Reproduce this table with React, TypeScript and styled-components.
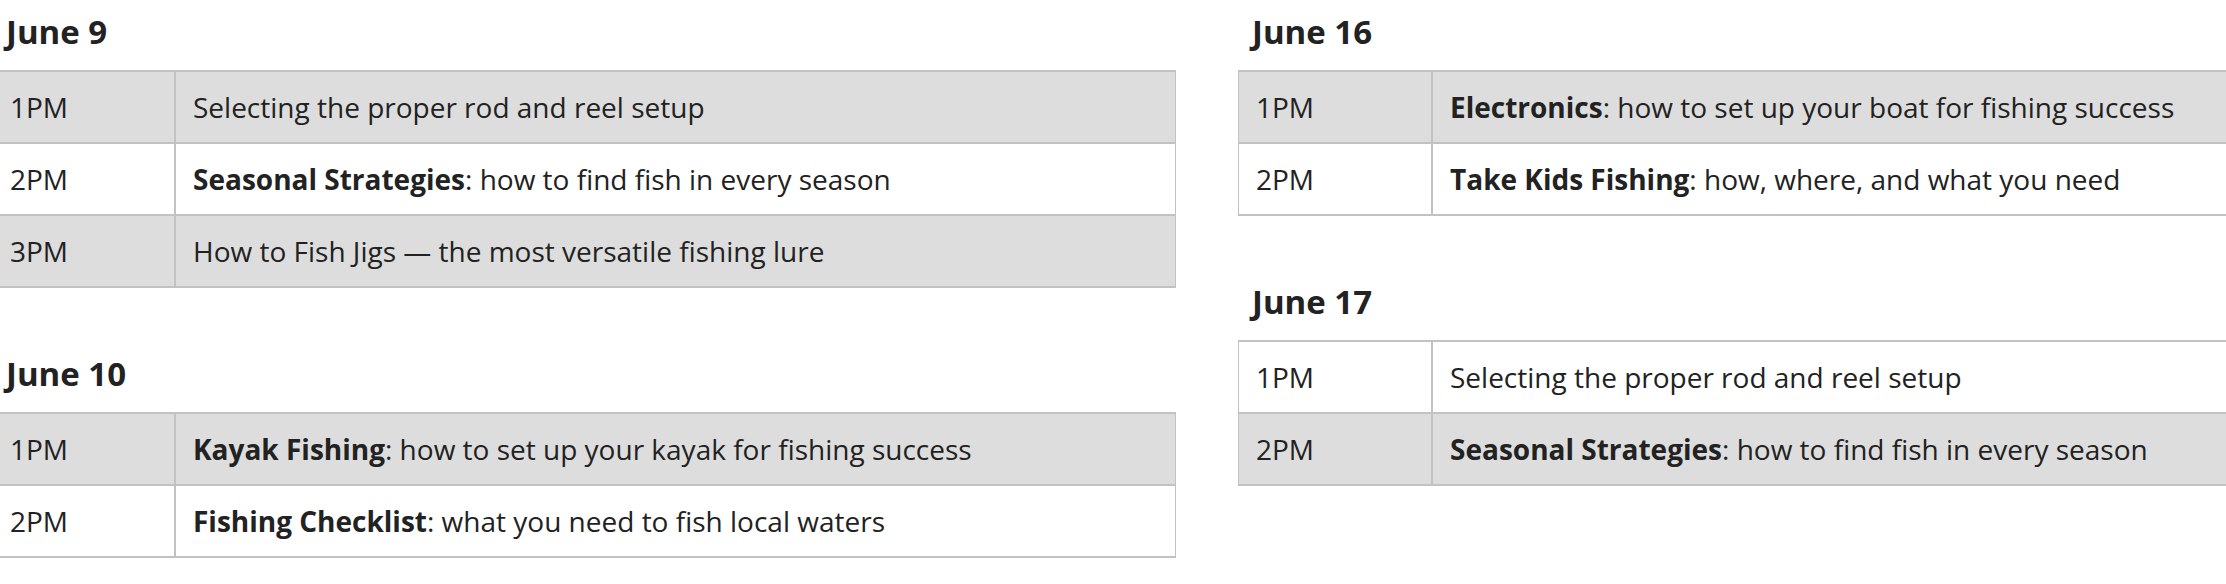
import React from 'react';
import styled, { createGlobalStyle } from 'styled-components';

const GlobalStyle = createGlobalStyle`
* {
    box-sizing: border-box;
}
body {
    margin: 0;
    background: #ffffff;
    overflow: hidden;
    font-family: "Open Sans", "Liberation Sans", sans-serif;
    color: #222222;
}
`;

const Page = styled.div`
display: flex;
align-items: flex-start;
gap: 62px;
width: max-content;
margin-left: -8px;
padding-top: 11px;
`;

const Column = styled.div`
display: flex;
flex-direction: column;
gap: 65px;
width: 1184px;
`;

const Heading = styled.h2`
margin: 0 0 18px 14px;
font-size: 33px;
line-height: 41px;
font-weight: 700;
color: #222222;
`;

const Table = styled.table`
width: 100%;
table-layout: fixed;
border-collapse: separate;
border-spacing: 0;
border-top: 2px solid #c2c2c2;
border-left: 1px solid #c2c2c2;
border-right: 1px solid #c2c2c2;
`;

const Row = styled.tr<{ $shaded: boolean }>`
background: ${p => (p.$shaded ? '#dddddd' : '#ffffff')};
`;

const Cell = styled.td`
padding: 0 17px;
line-height: 70px;
font-size: 28px;
font-weight: 400;
white-space: nowrap;
border-bottom: 2px solid #c2c2c2;
`;

const TimeCell = styled(Cell)<{ $width: number }>`
width: ${p => p.$width}px;
border-right: 2px solid #c2c2c2;
`;

const Topic = styled.strong`
font-weight: 700;
`;

type Talk = { time: string; topic?: string; text: string; shaded: boolean };
type Day = { date: string; timeWidth: number; talks: Talk[] };

const left: Day[] = [
    {
        date: 'June 9',
        timeWidth: 183,
        talks: [
            { time: '1PM', text: 'Selecting the proper rod and reel setup', shaded: true },
            { time: '2PM', topic: 'Seasonal Strategies', text: ': how to find fish in every season', shaded: false },
            { time: '3PM', text: 'How to Fish Jigs \u2014 the most versatile fishing lure', shaded: true },
        ],
    },
    {
        date: 'June 10',
        timeWidth: 183,
        talks: [
            { time: '1PM', topic: 'Kayak Fishing', text: ': how to set up your kayak for fishing success', shaded: true },
            { time: '2PM', topic: 'Fishing Checklist', text: ': what you need to fish local waters', shaded: false },
        ],
    },
];

const right: Day[] = [
    {
        date: 'June 16',
        timeWidth: 194,
        talks: [
            { time: '1PM', topic: 'Electronics', text: ': how to set up your boat for fishing success', shaded: true },
            { time: '2PM', topic: 'Take Kids Fishing', text: ': how, where, and what you need', shaded: false },
        ],
    },
    {
        date: 'June 17',
        timeWidth: 194,
        talks: [
            { time: '1PM', text: 'Selecting the proper rod and reel setup', shaded: false },
            { time: '2PM', topic: 'Seasonal Strategies', text: ': how to find fish in every season', shaded: true },
        ],
    },
];

const Schedule = ({ day }: { day: Day }) => (
    <section>
        <Heading>{day.date}</Heading>
        <Table>
            <tbody>
                {day.talks.map(talk => (
                    <Row key={talk.time} $shaded={talk.shaded}>
                        <TimeCell $width={day.timeWidth}>{talk.time}</TimeCell>
                        <Cell>
                            {talk.topic && <Topic>{talk.topic}</Topic>}
                            {talk.text}
                        </Cell>
                    </Row>
                ))}
            </tbody>
        </Table>
    </section>
);

const App = () => {
    return (
        <>
            <GlobalStyle />
            <Page>
                <Column>
                    {left.map(day => <Schedule key={day.date} day={day} />)}
                </Column>
                <Column>
                    {right.map(day => <Schedule key={day.date} day={day} />)}
                </Column>
            </Page>
        </>
    );
};

export default App;
